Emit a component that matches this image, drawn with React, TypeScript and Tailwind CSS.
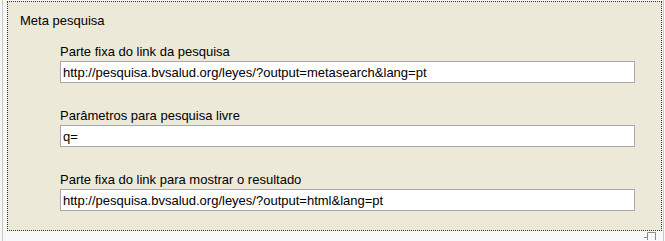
const fields = [
  {
    label: "Parte fixa do link da pesquisa",
    value: "http://pesquisa.bvsalud.org/leyes/?output=metasearch&lang=pt",
  },
  { label: "Parâmetros para pesquisa livre", value: "q=" },
  {
    label: "Parte fixa do link para mostrar o resultado",
    value: "http://pesquisa.bvsalud.org/leyes/?output=html&lang=pt",
  },
];

export default function App() {
  return (
    <div
      className="h-[241px] w-[665px] overflow-hidden bg-[#f8f8f8] text-[13px] leading-4 text-black"
      style={{ fontFamily: '"Liberation Sans", Arial, sans-serif' }}
    >
      <div className="ml-[2px] flex h-full w-[662px] flex-col border-x border-[#c9c9c9] pt-[1px]">
        <div className="ml-[4px] w-[655px] border border-dotted border-[#0030d0] bg-[#ece9d8] pb-[19px] pl-[12px] pt-[11px]">
          <div>Meta pesquisa</div>
          <div className="mt-[15px] flex flex-col gap-[25px] pl-[40px]">
            {fields.map((f) => (
              <div key={f.label} className="flex flex-col gap-[1px]">
                <label>{f.label}</label>
                <input
                  readOnly
                  value={f.value}
                  className="h-[22px] w-[575px] border border-[#a9a9a9] bg-white px-[2px] text-[13px] text-black outline-none"
                  style={{ fontFamily: '"Liberation Sans", Arial, sans-serif' }}
                />
              </div>
            ))}
          </div>
        </div>
        <div className="flex justify-end pr-[7px] pt-[1px]">
          <svg width="12" height="8" viewBox="0 0 12 8" className="block">
            <path d="M3.5 8V0.5H11.5V8" fill="none" stroke="#8a8a8a" strokeWidth="1" />
            <path d="M0 5.5H3.5" stroke="#8a8a8a" strokeWidth="1" />
          </svg>
        </div>
      </div>
    </div>
  );
}
